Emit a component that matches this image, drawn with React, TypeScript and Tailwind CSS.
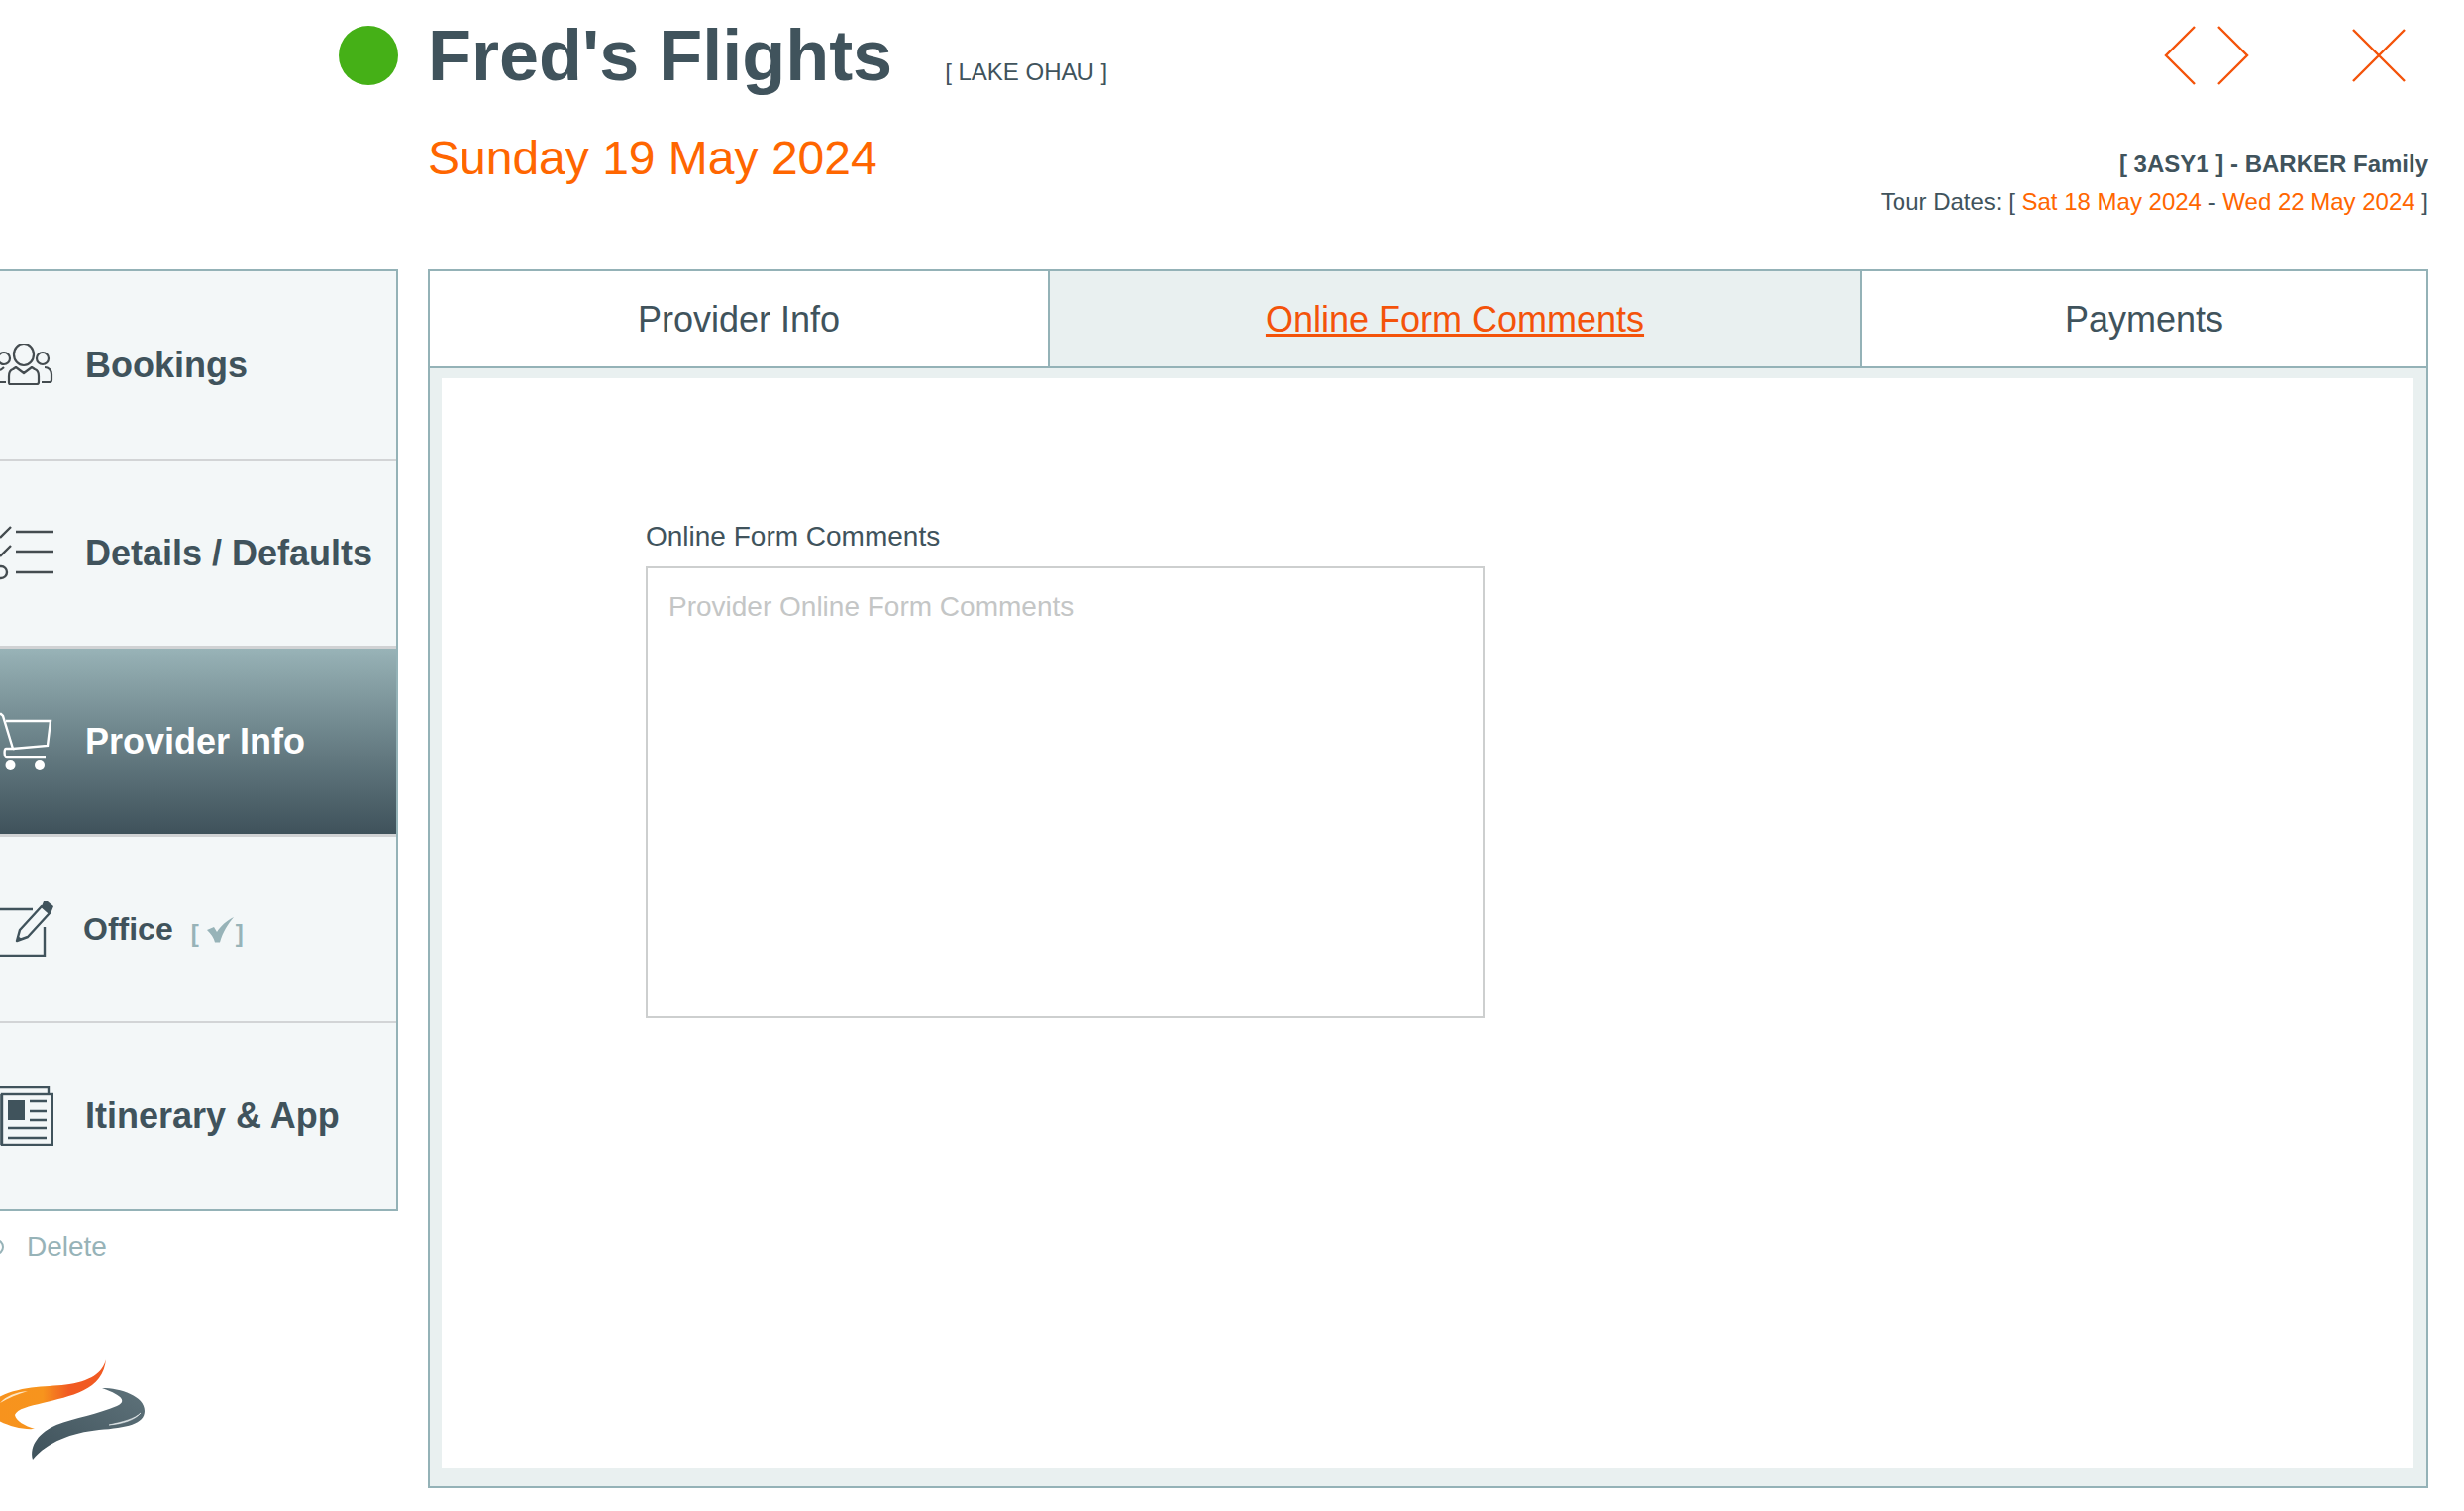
import type { ReactNode } from "react";

const font = "font-['Liberation_Sans','Arial',sans-serif]";

function GroupIcon() {
  return (
    <svg width="54" height="44" viewBox="0 0 54 44" fill="none" stroke="#444c50" strokeWidth="2.2">
      <ellipse cx="24" cy="11" rx="10" ry="11" />
      <path d="M10 41c-1 0-1-1-1-2v-6c0-3 1-6 4-7l3-2 8 6 8-6 3 2c3 1 4 4 4 7v6c0 1 0 2-2 2z" strokeLinejoin="round" />
      <circle cx="43" cy="15" r="6" />
      <path d="M45 24c4 0 7 3 7 7v6c0 1-1 2-2 2h-8" />
      <circle cx="4" cy="15" r="6" />
      <path d="M0 27c2-1 3-2 4-3M-2 39h8" />
    </svg>
  );
}

function ChecklistIcon() {
  return (
    <svg width="54" height="56" viewBox="0 0 54 56" fill="none" stroke="#444c50" strokeWidth="2.4">
      <path d="M16 6h38M16 26h38M16 47h38" />
      <path d="M0 12 11 1M0 31 11 20" />
      <circle cx="1" cy="47" r="6" />
    </svg>
  );
}

function CartIcon() {
  return (
    <svg width="54" height="60" viewBox="0 0 54 60" fill="none" stroke="#ffffff" strokeWidth="2.4">
      <path d="M-1 2H1L3 4L13 37H6C4 37 4 46 7 46H46" />
      <path d="M6 9H51L48 34L13 37" strokeLinejoin="miter" />
      <circle cx="10.5" cy="54" r="5" fill="#ffffff" stroke="none" />
      <circle cx="40" cy="54" r="5" fill="#ffffff" stroke="none" />
    </svg>
  );
}

function OfficeIcon() {
  return (
    <svg width="54" height="56" viewBox="0 0 54 56" fill="none">
      <path d="M-2 8H33M45 26V55H-2" stroke="#40535c" strokeWidth="2.4" />
      <path d="M17 40 20 29 42 5 50 12 28 36z" stroke="#40535c" strokeWidth="2.4" strokeLinejoin="round" />
      <path d="M44 0 48 0 54 5 52 10 50 12 42 5z" fill="#40535c" />
      <path d="M17 40 18 35 22 38z" fill="#40535c" />
    </svg>
  );
}

function NewsIcon() {
  return (
    <svg width="54" height="60" viewBox="0 0 54 60" fill="none" stroke="#40535c">
      <path d="M0 1H49V7" strokeWidth="2.4" />
      <rect x="2" y="8" width="51" height="51" strokeWidth="2.4" fill="#f3f7f8" />
      <path d="M0 8V59" strokeWidth="1.5" />
      <rect x="8" y="14" width="17" height="20" fill="#40535c" stroke="none" />
      <path d="M30 15H47M30 25H47M30 34H47M8 42H47M8 52H47" strokeWidth="2.4" />
    </svg>
  );
}

function Logo() {
  return (
    <svg width="150" height="105" viewBox="0 0 150 105">
      <defs>
        <linearGradient id="flameOrange" x1="0" y1="0" x2="1" y2="0">
          <stop offset="0" stopColor="#f7931e" />
          <stop offset="0.42" stopColor="#f7941d" />
          <stop offset="0.66" stopColor="#f15a22" />
          <stop offset="1" stopColor="#f15a22" />
        </linearGradient>
        <linearGradient id="flameGrey" x1="0" y1="1" x2="1" y2="0">
          <stop offset="0" stopColor="#3f525b" />
          <stop offset="1" stopColor="#5e727a" />
        </linearGradient>
      </defs>
      <path
        d="M107 0C105 12 95 22 70 26C50 29 20 27 -3 40L-3 62C8 68 22 72 35 71C25 68 16 63 15 57C17 51 30 48 43 45C70 38 105 33 107 0Z"
        fill="url(#flameOrange)"
      />
      <path d="M0 45C6 38 16 34 28 33C18 36 8 40 0 45Z" fill="#fde6c4" />
      <path
        d="M103 30C122 30 146 38 146 53C146 66 128 70 100 72C72 75 48 84 33 102C29 88 40 74 57 67C75 60 100 56 118 48C127 44 126 38 103 30Z"
        fill="url(#flameGrey)"
      />
      <path d="M110 67C124 66 136 62 142 55C136 61 124 64 110 67Z" fill="#e5ebed" stroke="#e5ebed" strokeWidth="0.6" />
    </svg>
  );
}

function NavItem({
  icon,
  children,
  active,
  divider,
  heightClass,
}: {
  icon: ReactNode;
  children: ReactNode;
  active?: boolean;
  divider?: boolean;
  heightClass: string;
}) {
  return (
    <div
      className={`flex items-center gap-[32px] ${heightClass} ${
        active
          ? "bg-gradient-to-b from-[#98b3b7] to-[#3f525b] text-white border-y-[3px] border-[#d0d2d4]"
          : "text-[#40535c]"
      } ${divider ? "border-b-2 border-[#d2d4d6]" : ""}`}
    >
      <div className="w-[54px] shrink-0 flex items-center">{icon}</div>
      <div className="flex items-center text-[36px] font-bold leading-none whitespace-nowrap">{children}</div>
    </div>
  );
}

export default function App() {
  return (
    <div className={`${font} w-[2488px] h-[1526px] bg-white overflow-hidden text-[#40535c]`}>
      {/* Header */}
      <header className="h-[272px] flex justify-between">
        <div className="flex pl-[342px] pt-[26px] gap-[30px]">
          <div className="w-[60px] h-[60px] rounded-full bg-[#45b017]" />
          <div>
            <div className="flex items-baseline">
              <h1 className="text-[72px] font-bold leading-[60px] whitespace-nowrap">Fred's Flights</h1>
              <span className="ml-[53px] text-[24px] leading-none whitespace-nowrap">[ LAKE OHAU ]</span>
            </div>
            <div className="mt-[46px] text-[48px] leading-[56px] text-[#ff6600] whitespace-nowrap">Sunday 19 May 2024</div>
          </div>
        </div>

        <div className="pr-[36px] flex flex-col items-end">
          <div className="flex items-start pt-[26px] h-[150px] pr-[23px]">
            <svg width="32" height="60" viewBox="0 0 32 60" fill="none" stroke="#f4530a" strokeWidth="2.4">
              <path d="M31 1 2 30 31 59" />
            </svg>
            <svg width="32" height="60" viewBox="0 0 32 60" fill="none" stroke="#f4530a" strokeWidth="2.4" className="ml-[22px]">
              <path d="M1 1 30 30 1 59" />
            </svg>
            <svg width="54" height="54" viewBox="0 0 54 54" fill="none" stroke="#f4530a" strokeWidth="2.4" className="ml-[104px] mt-[3px]">
              <path d="M1 1 53 53M53 1 1 53" />
            </svg>
          </div>
          <div className="text-[24px] font-bold leading-[32px] whitespace-nowrap">[ 3ASY1 ] - BARKER Family</div>
          <div className="mt-[6px] text-[24px] leading-[32px] whitespace-nowrap">
            Tour Dates: [ <span className="text-[#ff6600]">Sat 18 May 2024</span> -{" "}
            <span className="text-[#ff6600]">Wed 22 May 2024</span> ]
          </div>
        </div>
      </header>

      <div className="flex items-start">
        {/* Sidebar */}
        <div className="w-[402px] shrink-0">
          <nav className="h-[951px] bg-[#f3f7f8] border-y-2 border-r-2 border-[#94b2b7] flex flex-col">
            <NavItem icon={<GroupIcon />} divider heightClass="h-[192px]">Bookings</NavItem>
            <NavItem icon={<ChecklistIcon />} heightClass="h-[186px]">Details / Defaults</NavItem>
            <NavItem icon={<CartIcon />} active heightClass="h-[193px]">Provider Info</NavItem>
            <NavItem icon={<OfficeIcon />} divider heightClass="h-[188px]">
              <span className="text-[32px] -ml-[2px]">Office</span>
              <span className="ml-[18px] mt-[4px] flex items-end text-[24px] font-bold text-[#97b3b8]">
                [
                <svg width="27" height="26" viewBox="0 0 27 26" fill="#97b3b8" className="ml-[8px] mr-[2px] mb-[3px]">
                  <path d="M0 13 7 10 10 15C14 9 19 4 27 0C21 7 16 15 13 25.5H8C7 21 4 17 0 13Z" />
                </svg>
                ]
              </span>
            </NavItem>
            <NavItem icon={<NewsIcon />} heightClass="h-[188px]">Itinerary &amp; App</NavItem>
          </nav>

          <div className="relative mt-[20px] pl-[27px] text-[28px] leading-[32px] text-[#97b3b8]">
            <span className="absolute -left-[12px] top-[8px] w-[16px] h-[16px] rounded-full border-2 border-[#97b3b8]" />
            Delete
          </div>
          <div className="mt-[97px]">
            <Logo />
          </div>
        </div>

        {/* Main panel */}
        <main className="ml-[30px] w-[2020px] h-[1231px] border-2 border-[#94b2b7] bg-[#e9f0f0] flex flex-col">
          <div className="h-[98px] flex shrink-0 text-[36px] border-b-2 border-[#94b2b7]">
            <div className="w-[624px] pt-[2px] bg-white flex items-center justify-center">Provider Info</div>
            <div className="w-[822px] pt-[2px] border-x-2 border-[#94b2b7] flex items-center justify-center text-[#f4530a] underline decoration-[3px]">
              Online Form Comments
            </div>
            <div className="flex-1 pt-[2px] bg-white flex items-center justify-center">Payments</div>
          </div>
          <div className="flex-1 mt-[10px] ml-[12px] mr-[14px] mb-[18px] bg-white pl-[206px] pt-[142px]">
            <label className="block text-[28px] leading-[36px] mb-[12px]">Online Form Comments</label>
            <div className="w-[847px] h-[456px] border-2 border-[#cdcfcf] pl-[21px] pt-[21px] text-[28px] leading-[36px] text-[#c4c6c6]">
              Provider Online Form Comments
            </div>
          </div>
        </main>
      </div>
    </div>
  );
}
